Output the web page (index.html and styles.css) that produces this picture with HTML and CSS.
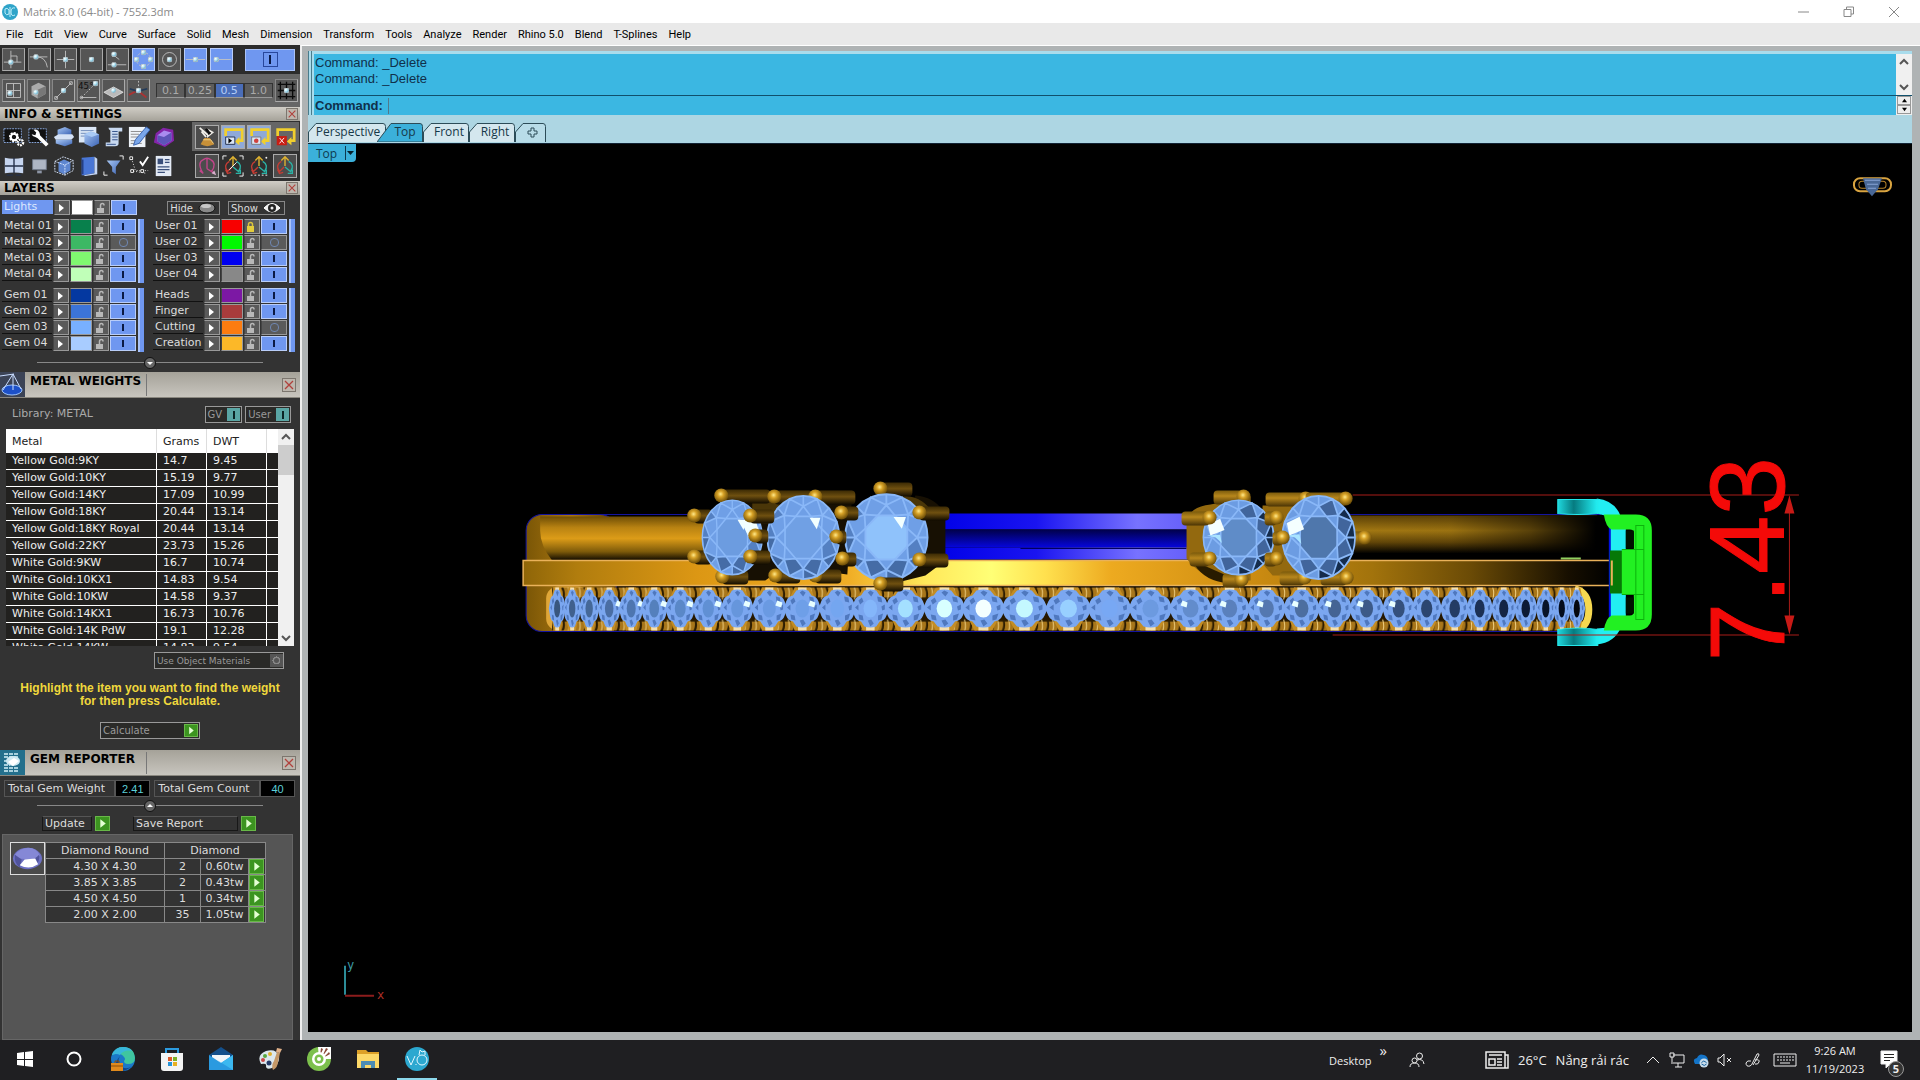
FILE: index.html
```html
<!DOCTYPE html>
<html lang="en">
<head>
    <meta charset="UTF-8">
    <meta name="viewport" content="width=device-width, initial-scale=1.0">
    <title>Matrix 8.0 (64-bit) - 7552.3dm</title>
    <link rel="stylesheet" href="styles.css">
</head>
<body>
    <!-- shared shapes -->
    <svg class="defs" aria-hidden="true">
        <defs>
            <radialGradient id="bead-fill" cx="35%" cy="35%" r="70%">
                <stop offset="0" stop-color="#fff"/><stop offset=".4" stop-color="#bfe9f5"/><stop offset="1" stop-color="#4a9cc0"/>
            </radialGradient>
            <linearGradient id="box-blue" x1="0" y1="0" x2="1" y2="1">
                <stop offset="0" stop-color="#a9c8f4"/><stop offset="1" stop-color="#3a62b4"/>
            </linearGradient>
            <symbol id="bead" viewBox="0 0 6 6"><circle cx="3" cy="3" r="3" fill="url(#bead-fill)"/></symbol>
            <symbol id="lock-open" viewBox="0 0 12 12"><path d="M5.500 6V3.500Q5.500 1.500 7.500 1.500Q9 1.500 9 3.500" fill="none" stroke="#b8b8b8" stroke-width="1.500"/><path d="M2 6h7v5H2z" fill="#b8b8b8"/></symbol>
            <symbol id="lock-shut" viewBox="0 0 12 12"><path d="M3.500 6V3.500Q3.500 1.500 5.500 1.500Q7.500 1.500 7.500 3.500V6" fill="none" stroke="#d9c23c" stroke-width="1.500"/><path d="M2 5h7v6H2z" fill="#e3cc3c"/></symbol>
            <symbol id="close" viewBox="0 0 12 12"><path d="M2 2l8 8M10 2l-8 8" stroke="#b0413c" stroke-width="1.300" fill="none"/></symbol>
            <symbol id="play" viewBox="0 0 12 12"><path d="M4 2v8l5-4z" fill="#e4ffd4"/></symbol>
        </defs>
    </svg>

    <header class="titlebar">
        <svg class="app-icon" viewBox="0 0 16 16"><circle cx="8" cy="8" r="8" fill="#2fa4c9"/><path d="M3 5q2-2 4 1v4q-3 2-4-1zM13 4q-4-1-4 4t4 3M8 3v10" fill="none" stroke="#bdeefa" stroke-width="1"/></svg>
        <h1>Matrix 8.0 (64-bit) - 7552.3dm</h1>
        <div class="window-buttons">
            <button aria-label="Minimize"><svg viewBox="0 0 12 12"><path d="M0 6h11"/></svg></button>
            <button aria-label="Restore"><svg viewBox="0 0 12 12"><path d="M1 3.500h7v7H1zM3.500 3.500V1h7v7H8"/></svg></button>
            <button aria-label="Close"><svg viewBox="0 0 12 12"><path d="M1 1l10 10M11 1L1 11"/></svg></button>
        </div>
    </header>

    <nav class="menubar">
        <a href="#">File</a><a href="#">Edit</a><a href="#">View</a><a href="#">Curve</a><a href="#">Surface</a><a href="#">Solid</a><a href="#">Mesh</a><a href="#">Dimension</a><a href="#">Transform</a><a href="#">Tools</a><a href="#">Analyze</a><a href="#">Render</a><a href="#">Rhino 5.0</a><a href="#">Blend</a><a href="#">T-Splines</a><a href="#">Help</a>
    </nav>

    <main class="desk">
        <aside class="side">
            <!-- object snaps -->
            <div class="snaps">
                <button class="snap" aria-label="Perpendicular"><svg viewBox="0 0 24 24"><path d="M1 15h20M9 2v20M9 8h7v7" /><use href="#bead" x="6" y="12" width="6" height="6"/></svg></button>
                <button class="snap" aria-label="Tangent"><svg viewBox="0 0 24 24"><path d="M1 9h8q10 0 12 12M9 9h12"/><use href="#bead" x="5" y="6" width="6" height="6"/></svg></button>
                <button class="snap" aria-label="Intersection"><svg viewBox="0 0 24 24"><path d="M2 12h20M12 2v20"/><use href="#bead" x="9" y="9" width="6" height="6"/></svg></button>
                <button class="snap" aria-label="Point"><svg viewBox="0 0 24 24"><use href="#bead" x="9" y="9" width="6" height="6"/></svg></button>
                <button class="snap" aria-label="Near"><svg viewBox="0 0 24 24"><path d="M1 18h21M10 9l4 3"/><use href="#bead" x="5" y="3" width="6" height="6"/><use href="#bead" x="5" y="15" width="6" height="6"/></svg></button>
                <button class="snap on" aria-label="Quadrant"><svg viewBox="0 0 24 24"><circle cx="12" cy="12" r="8" stroke-dasharray="3 2"/><use href="#bead" x="9" y="1" width="6" height="6"/><use href="#bead" x="9" y="17" width="6" height="6"/><use href="#bead" x="1" y="9" width="6" height="6"/><use href="#bead" x="17" y="9" width="6" height="6"/></svg></button>
                <button class="snap" aria-label="Center"><svg viewBox="0 0 24 24"><circle cx="12" cy="12" r="8"/><use href="#bead" x="9" y="9" width="6" height="6"/></svg></button>
                <button class="snap on" aria-label="Midpoint"><svg viewBox="0 0 24 24"><path d="M1 12h22"/><use href="#bead" x="9" y="9" width="6" height="6"/></svg></button>
                <button class="snap on" aria-label="End"><svg viewBox="0 0 24 24"><path d="M5 12h18"/><use href="#bead" x="3" y="9" width="6" height="6"/></svg></button>
                <button class="snap-all" aria-label="Snaps on"><span></span></button>
            </div>
            <div class="grid-row">
                <button class="snap" aria-label="Planar"><svg viewBox="0 0 24 24"><path d="M4 4h16v16H4zM12 4v16M4 12h16"/><use href="#bead" x="5" y="12" width="6" height="6"/></svg></button>
                <button class="snap" aria-label="Box"><svg viewBox="0 0 24 24"><path d="M4 7l8-4 8 4v9l-9 5-7-4z" fill="#aaa" stroke="none"/><path d="M11 11l9-4v9l-9 5z" fill="#777" stroke="none"/><use href="#bead" x="6" y="11" width="6" height="6"/></svg></button>
                <button class="snap" aria-label="Line"><svg viewBox="0 0 24 24"><path d="M3 21L21 3M2 19h3v3H2zM19 2h3v3h-3z"/><use href="#bead" x="9" y="9" width="6" height="6"/></svg></button>
                <button class="snap gap" aria-label="Angle"><svg viewBox="0 0 24 24"><path d="M4 20L18 6" stroke-dasharray="2 2"/><path d="M3 20h18"/><circle cx="4" cy="20" r="1.500"/><text x="0" y="10" class="deg">45°</text><use href="#bead" x="17" y="1" width="6" height="6"/></svg></button>
                <button class="snap" aria-label="Project"><svg viewBox="0 0 24 24"><path d="M1 14l11-6 11 6-11 6z" fill="#bbb" stroke="#ddd"/><use href="#bead" x="9" y="9" width="6" height="6"/></svg></button>
                <button class="snap" aria-label="Smart track"><svg viewBox="0 0 24 24"><path d="M12 1v10" stroke-dasharray="2 2"/><path d="M1 17l10-5 10 8" stroke="#a33" stroke-width="2"/><path d="M2 10l9 3 11-3" stroke="#223a5a" stroke-width="2"/><use href="#bead" x="9" y="9" width="6" height="6"/></svg></button>
                <div class="steps">
                    <button>0.1</button><button>0.25</button><button class="on">0.5</button><button>1.0</button>
                </div>
                <button class="snap" aria-label="Grid snap"><svg viewBox="0 0 24 24"><path d="M5 2v20M12 2v20M19 2v20M2 5h20M2 12h20M2 19h20" stroke="#0a0a0a" stroke-width="1.500"/><use href="#bead" x="9" y="9" width="6" height="6"/></svg></button>
            </div>

            <div class="strip"><h2>INFO &amp; SETTINGS</h2><button class="close" aria-label="Close"><svg><use href="#close"/></svg></button></div>
            <div class="tools">
                <div class="tool-set">
                    <button aria-label="Options"><svg viewBox="0 0 24 24"><path d="M1 3h19v15H1z" fill="#111" stroke="#8fb0e8" stroke-dasharray="2 1"/><circle cx="12" cy="12" r="4" fill="none" stroke="#fff" stroke-width="3" stroke-dasharray="2 1"/><circle cx="12" cy="12" r="3.500" fill="none" stroke="#fff" stroke-width="2"/><circle cx="19" cy="18" r="3" fill="none" stroke="#fff" stroke-width="2.500" stroke-dasharray="2 1"/></svg></button>
                    <button aria-label="Tools"><svg viewBox="0 0 24 24"><path d="M1 3h19v15H1z" fill="#111" stroke="#8fb0e8" stroke-dasharray="2 1"/><path d="M10 10l11 11" stroke="#fff" stroke-width="4"/><path d="M6 4q6-1 7 5t-5 3q-3 0-4-3l4 1 1-3z" fill="#fff"/></svg></button>
                    <button aria-label="Cut"><svg viewBox="0 0 24 24"><path d="M5 4l8-3 7 3v6H5z" fill="url(#box-blue)"/><path d="M1 12l5-3h15l2 3-3 3H3z" fill="#d6e2f5"/><path d="M3 15h18v4l-8 3-10-3z" fill="url(#box-blue)"/></svg></button>
                    <button aria-label="Object info"><svg viewBox="0 0 24 24"><path d="M1 1h19v17H1z" fill="#dbe7f6"/><path d="M3 5h14M3 8h10M3 11h6" stroke="#6b88b8"/><path d="M7 9l7-3 9 3v10l-8 4-8-4z" fill="url(#box-blue)"/><path d="M7 9l8 3 8-3-9-3z" fill="#a9caf5"/></svg></button>
                    <button aria-label="History"><svg viewBox="0 0 24 24"><path d="M6 2h15v4h-4v13q0 3-4 3H3v-4h5V5q-2-1-2-3z" fill="#c8d9f0"/><path d="M10 6h6M10 9h6M10 12h6M10 15h6M4 20h10" stroke="#2d4b85"/></svg></button>
                    <button aria-label="Notes"><svg viewBox="0 0 24 24"><path d="M1 1h18v22H1z" fill="#eef3f8"/><path d="M3 6h12M3 9h9M3 12h9M3 16h12M3 19h12" stroke="#888"/><path d="M20 1l4 3-12 15-6 2 2-6z" fill="#7aa7ea" stroke="#345fae"/></svg></button>
                    <button aria-label="Package"><svg viewBox="0 0 24 24"><path d="M3 8l8-6 11 2 1 12-10 7L1 18z" fill="#8424a8"/><path d="M5 10l7-5 8 2v9l-8 5-7-4z" fill="#a98cf0"/><path d="M5 10l7 2 8-5v9l-8 5-7-4z" fill="#5d54b8"/></svg></button>
                    <button aria-label="Viewports"><svg viewBox="0 0 24 24"><path d="M2 3q9 2 20 0v17q-10-2-20 0z" fill="#c6d5ef"/><path d="M12 3v17M2 12h20M4 22h7M14 22h6" stroke="#25304a" stroke-width="1.500"/></svg></button>
                    <button aria-label="Display"><svg viewBox="0 0 24 24"><path d="M5 5h15v11H5z" fill="#aeb6c4" stroke="#6f7889"/><path d="M10 17h5v3h-5z" fill="#8d95a5"/></svg></button>
                    <button aria-label="Bounding box"><svg viewBox="0 0 24 24"><path d="M6 8l6-3 7 3v9l-7 4-6-3z" fill="#5e86d0"/><path d="M2 7l9-5 11 4v11l-9 5-11-4zM2 7l11 4 9-5M13 11v11" fill="none" stroke="#dce9ff" stroke-dasharray="2 1"/></svg></button>
                    <button aria-label="Library"><svg viewBox="0 0 24 24"><path d="M4 3l14-1v18l-12 2H4z" fill="#4976d6"/><path d="M18 2l3 2v17l-13 2-2-1 12-2z" fill="#c4d6f5"/><path d="M5 5v16" stroke="#243f85" stroke-width="2"/></svg></button>
                    <button aria-label="Filter"><svg viewBox="0 0 24 24"><path d="M4 6h15l-5 7v8l-4-3v-5z" fill="url(#box-blue)"/><path d="M18 1h4v4M1 18v4h4" stroke="#fff" fill="none"/></svg></button>
                    <button aria-label="Points"><svg viewBox="0 0 24 24"><path d="M4 4l4 13h14M3 17L20 20" stroke="#fff" stroke-dasharray="1 2" fill="none"/><path d="M2 2h3v3H2zM3 16h3v3H3zM14 16h3v3h-3z" fill="#222" stroke="#fff"/><path d="M13 7l3 4 6-9" stroke="#fff" stroke-width="2" fill="none"/></svg></button>
                    <button aria-label="Report"><svg viewBox="0 0 24 24"><path d="M3 1h17v22H3z" fill="#e3eaf5"/><path d="M5 4h6v6H5z" fill="#3a4f7a"/><path d="M13 5h5M13 8h5M5 13h13M5 16h13M5 19h8" stroke="#3a4f7a" stroke-width="1.500"/></svg></button>
                </div>
                <div class="tool-set right">
                    <button class="framed" aria-label="Render metal"><svg viewBox="0 0 24 24"><path d="M5 20l4-7h6l5 7q-8 4-15 0z" fill="#c79038"/><path d="M8 15h8l3 4" fill="none" stroke="#f3d58b"/><path d="M4 2l8 7M11 12l-5-6M13 4l5 3-5 4z" stroke="#f0eee8" stroke-width="2"/><path d="M11 3l4 6" stroke="#111" stroke-width="3"/></svg></button>
                    <button class="framed lit" aria-label="Loop play"><svg viewBox="0 0 24 24"><path d="M4 11V4h18v12h-5" fill="none" stroke="#f1cf2e" stroke-width="3"/><path d="M19 12v9l-5-4z" fill="#f1cf2e"/><path d="M4 12h10v8H4z" fill="#dbe6f5" stroke="#1c2b4a"/><path d="M7 13v6l4-3z"/></svg></button>
                    <button class="framed lit" aria-label="Loop record"><svg viewBox="0 0 24 24"><path d="M4 11V4h18v12h-5" fill="none" stroke="#f1cf2e" stroke-width="3"/><path d="M19 12v9l-5-4z" fill="#f1cf2e"/><path d="M4 12h10v8H4z" fill="#dbe6f5" stroke="#777"/><circle cx="9" cy="16" r="2.500" fill="#d0413d"/></svg></button>
                    <button aria-label="Loop stop"><svg viewBox="0 0 24 24"><path d="M4 11V4h18v12h-5" fill="none" stroke="#f1cf2e" stroke-width="3"/><path d="M19 12v9l-5-4z" fill="#f1cf2e"/><path d="M3 11h11v10H3z" fill="#c91d12"/><path d="M6 13l5 6M11 13l-5 6" stroke="#fff"/></svg></button>
                    <button class="framed" aria-label="Gumball rotate"><svg viewBox="0 0 24 24"><path d="M7 19Q1 8 8 5q4-3 8 0 7 4 1 13M12 4v11M4 17l4 3M12 15l8 5" fill="none" stroke="#c2458a" stroke-width="1.500"/><path d="M17 20l5 2-2-5" fill="#d9b0cc"/></svg></button>
                    <button aria-label="Gumball scale"><svg viewBox="0 0 24 24"><path d="M12 3v9M8 6l4-4 4 4" fill="none" stroke="#e0b32f" stroke-width="1.500"/><path d="M8 7Q1 11 6 18l5-5M4 16l2 4 4-1" fill="none" stroke="#c33c34" stroke-width="1.500"/><path d="M16 7q7 4 2 11l-6-5M15 20h5v-4" fill="none" stroke="#2bb3a6" stroke-width="1.500"/><path d="M1 5V1h4M19 1h4v4M1 19v4h4M23 19v4h-4M8 16l8-8" fill="none" stroke="#fff"/></svg></button>
                    <button aria-label="Gumball move"><svg viewBox="0 0 24 24"><path d="M12 3v9M8 6l4-4 4 4" fill="none" stroke="#e0b32f" stroke-width="1.500"/><path d="M8 7Q1 11 6 18l5-5M4 16l2 4 4-1" fill="none" stroke="#c33c34" stroke-width="1.500"/><path d="M16 7q7 4 2 11l-6-5M15 20h5v-4" fill="none" stroke="#2bb3a6" stroke-width="1.500"/><path d="M19 3h3M20 2v3M3 22h18" stroke="#fff" stroke-dasharray="2 2"/></svg></button>
                    <button class="framed" aria-label="Gumball on"><svg viewBox="0 0 24 24"><path d="M12 3v9M8 6l4-4 4 4" fill="none" stroke="#e0b32f" stroke-width="1.500"/><path d="M8 7Q1 11 6 18l5-5M4 16l2 4 4-1" fill="none" stroke="#c33c34" stroke-width="1.500"/><path d="M16 7q7 4 2 11l-6-5M15 20h5v-4" fill="none" stroke="#2bb3a6" stroke-width="1.500"/></svg></button>
                </div>
            </div>

            <div class="strip"><h2>LAYERS</h2><button class="close" aria-label="Close"><svg><use href="#close"/></svg></button></div>
            <section class="layers">
                <div class="layer-top">
                    <div id="layer-lights"></div>
                    <div class="hide-show">
                        <button>Hide <svg viewBox="0 0 18 12"><ellipse cx="9" cy="6" rx="8" ry="5" fill="#888" stroke="#111"/><ellipse cx="8" cy="4" rx="5" ry="2" fill="#c8c8c8"/></svg></button>
                        <button>Show <svg viewBox="0 0 18 12"><path d="M1 6q8-9 16 0-8 8-16 0z" fill="#eee" stroke="#fff"/><circle cx="9" cy="6" r="4" fill="#222"/><circle cx="9" cy="6" r="1.500" fill="#eee"/></svg></button>
                    </div>
                </div>
                <div class="layer-grid" id="layer-grid"></div>
            </section>
            <div class="fold"><button aria-label="Fold layers"><svg viewBox="0 0 12 12"><circle cx="6" cy="6" r="5.500" fill="#666" stroke="#111"/><path d="M3 5h6L6 8z" fill="#fff"/></svg></button></div>

            <div class="panel-head">
                <svg class="panel-icon" viewBox="0 0 25 25"><path fill="#3b4356" d="M0 0h25v25H0z"/><ellipse cx="12" cy="18" rx="10" ry="5" fill="#1c50c8" stroke="#9cc4ff"/><path d="M0 4l14-2M13 2L3 18M13 2l8 15M13 2v16" stroke="#c8dcff" fill="none"/></svg>
                <h2>METAL WEIGHTS</h2><button class="close" aria-label="Close"><svg><use href="#close"/></svg></button>
            </div>
            <section class="metals">
                <div class="library">
                    <span>Library: METAL</span>
                    <button class="switch">GV<i></i></button>
                    <button class="switch">User<i></i></button>
                </div>
                <div class="metal-list">
                    <table>
                        <thead><tr><th>Metal</th><th>Grams</th><th>DWT</th><th></th></tr></thead>
                        <tbody>
                            <tr><td>Yellow Gold:9KY</td><td>14.7</td><td>9.45</td><td></td></tr>
                            <tr><td>Yellow Gold:10KY</td><td>15.19</td><td>9.77</td><td></td></tr>
                            <tr><td>Yellow Gold:14KY</td><td>17.09</td><td>10.99</td><td></td></tr>
                            <tr><td>Yellow Gold:18KY</td><td>20.44</td><td>13.14</td><td></td></tr>
                            <tr><td>Yellow Gold:18KY Royal</td><td>20.44</td><td>13.14</td><td></td></tr>
                            <tr><td>Yellow Gold:22KY</td><td>23.73</td><td>15.26</td><td></td></tr>
                            <tr><td>White Gold:9KW</td><td>16.7</td><td>10.74</td><td></td></tr>
                            <tr><td>White Gold:10KX1</td><td>14.83</td><td>9.54</td><td></td></tr>
                            <tr><td>White Gold:10KW</td><td>14.58</td><td>9.37</td><td></td></tr>
                            <tr><td>White Gold:14KX1</td><td>16.73</td><td>10.76</td><td></td></tr>
                            <tr><td>White Gold:14K PdW</td><td>19.1</td><td>12.28</td><td></td></tr>
                            <tr><td>White Gold:14KW</td><td>14.83</td><td>9.54</td><td></td></tr>
                        </tbody>
                    </table>
                    <div class="scroll">
                        <svg viewBox="0 0 16 16"><path d="M4 10l4-4 4 4"/></svg>
                        <div class="thumb"></div>
                        <svg viewBox="0 0 16 16"><path d="M4 6l4 4 4-4"/></svg>
                    </div>
                </div>
                <button class="switch materials">Use Object Materials<i></i></button>
                <p class="hint">Highlight the item you want to find the weight<br>for then press Calculate.</p>
                <button class="switch calc">Calculate<svg class="go"><use href="#play"/></svg></button>
            </section>

            <div class="panel-head">
                <svg class="panel-icon" viewBox="0 0 25 25"><path fill="#236f8c" d="M0 0h25v25H0z"/><path d="M4 4h14M4 7h14M4 11h6M4 15h6M4 18h14M4 21h14" stroke="#d5f1f8" stroke-width="1.500" stroke-dasharray="4 1"/><ellipse cx="13" cy="11" rx="7" ry="5" fill="#cfe9f2"/><path d="M8 12l5 4 6-5-5-3z" fill="#fff"/></svg>
                <h2>GEM REPORTER</h2><button class="close" aria-label="Close"><svg><use href="#close"/></svg></button>
            </div>
            <section class="gems">
                <div class="totals">
                    <label for="gem-weight">Total Gem Weight</label><input id="gem-weight" value="2.41" readonly>
                    <label for="gem-count">Total Gem Count</label><input id="gem-count" value="40" readonly>
                </div>
                <div class="fold"><button aria-label="Fold report"><svg viewBox="0 0 12 12"><circle cx="6" cy="6" r="5.500" fill="#666" stroke="#111"/><path d="M3 7h6L6 4z" fill="#fff"/></svg></button></div>
                <div class="actions">
                    <button class="update"><span>Update</span><svg class="go"><use href="#play"/></svg></button>
                    <button class="save"><span>Save Report</span><svg class="go"><use href="#play"/></svg></button>
                </div>
                <div class="report">
                    <svg class="gem-thumb" viewBox="0 0 34 32"><ellipse cx="17" cy="16" rx="15" ry="11" fill="#6d70c2"/><path d="M4 12q6-7 14-7t12 8l-9 4-13-1z" fill="#8588d6"/><path d="M4 12l7 5-2 8q-6-4-5-13zM29 12l-5 5 1 6q5-4 4-11z" fill="#50539c"/><path d="M9 23l5-6 11-1 3 6q-9 6-19 1z" fill="#fff"/></svg>
                    <table>
                        <tr><th>Diamond Round</th><th colspan="3">Diamond</th></tr>
                        <tr><td>4.30 X 4.30</td><td>2</td><td>0.60tw</td><td><button aria-label="Select 4.30"><svg class="go"><use href="#play"/></svg></button></td></tr>
                        <tr><td>3.85 X 3.85</td><td>2</td><td>0.43tw</td><td><button aria-label="Select 3.85"><svg class="go"><use href="#play"/></svg></button></td></tr>
                        <tr><td>4.50 X 4.50</td><td>1</td><td>0.34tw</td><td><button aria-label="Select 4.50"><svg class="go"><use href="#play"/></svg></button></td></tr>
                        <tr><td>2.00 X 2.00</td><td>35</td><td>1.05tw</td><td><button aria-label="Select 2.00"><svg class="go"><use href="#play"/></svg></button></td></tr>
                    </table>
                </div>
            </section>
        </aside>

        <section class="work">
            <div class="command">
                <div class="history">
                    <div class="log">Command: _Delete<br>Command: _Delete</div>
                    <div class="scroll">
                        <svg viewBox="0 0 16 16"><path d="M4 10l4-4 4 4"/></svg>
                        <svg viewBox="0 0 16 16"><path d="M4 6l4 4 4-4"/></svg>
                    </div>
                </div>
                <div class="prompt">
                    <label for="cmd">Command:</label><input id="cmd" type="text">
                    <div class="spin"><button aria-label="Previous"><svg viewBox="0 0 8 6"><path d="M1 5h6L4 1z"/></svg></button><button aria-label="Next"><svg viewBox="0 0 8 6"><path d="M1 1h6L4 5z"/></svg></button></div>
                </div>
            </div>
            <div class="tabs">
                <button class="tab first"><svg viewBox="0 0 78 20"><path d="M.5 20V10L8 1.500h67q2.500 0 2.500 3V20"/></svg>Perspective</button>
                <button class="tab active"><svg viewBox="0 0 46 20"><path d="M0 20L14 1.500h29q2.500 0 2.500 3V20z"/></svg>Top</button>
                <button class="tab"><svg viewBox="0 0 46 20"><path d="M.5 20V10L8 1.500h35q2.500 0 2.500 3V20"/></svg>Front</button>
                <button class="tab"><svg viewBox="0 0 46 20"><path d="M.5 20V10L8 1.500h35q2.500 0 2.500 3V20"/></svg>Right</button>
                <button class="tab plus" aria-label="New viewport"><svg viewBox="0 0 31 20"><path d="M.5 20V10L8 1.500h20q2.500 0 2.500 3V20"/><path d="M16 6h3v3h3v3h-3v3h-3v-3h-3V9h3z" fill="none"/></svg></button>
            </div>
            <div class="viewport">
                <button class="view-name">Top<svg viewBox="0 0 10 18"><path d="M.5 2v14" stroke="#0d3a50"/><path d="M2 7h7l-3.500 4z" fill="#06202c"/></svg></button>
                <svg class="scene" viewBox="308 144 1603 887">
                    <defs>
                        <linearGradient id="tube" x1="0" y1="0" x2="0" y2="1">
                            <stop offset="0" stop-color="#6d4d05"/><stop offset=".25" stop-color="#b88212"/><stop offset=".5" stop-color="#dc9c18"/><stop offset=".8" stop-color="#7d5a0a"/><stop offset="1" stop-color="#0d0800"/>
                        </linearGradient>
                        <linearGradient id="tube-dim" x1="0" y1="0" x2="0" y2="1">
                            <stop offset="0" stop-color="#5a4006"/><stop offset=".4" stop-color="#a37812"/><stop offset=".7" stop-color="#644708"/><stop offset="1" stop-color="#000"/>
                        </linearGradient>
                        <linearGradient id="fade" x1="0" x2="1"><stop offset="0" stop-color="#000" stop-opacity="0"/><stop offset=".4" stop-color="#000" stop-opacity=".05"/><stop offset=".7" stop-color="#000" stop-opacity=".45"/><stop offset=".95" stop-color="#000"/></linearGradient>
                        <linearGradient id="edge" x1="0" x2="1"><stop offset="0" stop-color="#7a5606"/><stop offset=".5" stop-color="#a87510"/><stop offset="1" stop-color="#5c3f03"/></linearGradient>
                        <linearGradient id="band" x1="0" x2="1">
                            <stop offset="0" stop-color="#8e6508"/><stop offset=".05" stop-color="#b17d0e"/><stop offset=".16" stop-color="#dc9714"/><stop offset=".3" stop-color="#f0ae26"/><stop offset=".37" stop-color="#ffe85a"/><stop offset=".43" stop-color="#ffff76"/><stop offset=".48" stop-color="#ffe04e"/><stop offset=".54" stop-color="#edaa20"/><stop offset=".66" stop-color="#d08e12"/><stop offset=".78" stop-color="#a2730c"/><stop offset=".87" stop-color="#6b4b06"/><stop offset=".96" stop-color="#170f00"/><stop offset="1" stop-color="#000"/>
                        </linearGradient>
                        <linearGradient id="blue-a" x1="0" x2="1"><stop offset="0" stop-color="#0000e8"/><stop offset=".4" stop-color="#1a14f0"/><stop offset=".8" stop-color="#7772ff"/><stop offset="1" stop-color="#6660fa"/></linearGradient>
                        <linearGradient id="blue-b" x1="0" y1="0" x2="0" y2="1"><stop offset="0" stop-color="#000048"/><stop offset="1" stop-color="#0606dc"/></linearGradient>
                        <radialGradient id="ball" cx="45%" cy="40%" r="60%"><stop offset="0" stop-color="#ffe98a"/><stop offset=".35" stop-color="#d7a227"/><stop offset="1" stop-color="#6a4b06"/></radialGradient>
                        <linearGradient id="shaft" x1="0" y1="0" x2="0" y2="1"><stop offset="0" stop-color="#3b2a04"/><stop offset=".45" stop-color="#6f5010"/><stop offset="1" stop-color="#120c00"/></linearGradient>
                        <linearGradient id="shaft-lit" x1="0" y1="0" x2="0" y2="1"><stop offset="0" stop-color="#7a5a0c"/><stop offset=".4" stop-color="#b8871c"/><stop offset="1" stop-color="#4a3405"/></linearGradient>
                        <linearGradient id="cyan" x1="0" x2="1"><stop offset="0" stop-color="#1fd8de"/><stop offset=".4" stop-color="#067b80"/><stop offset="1" stop-color="#22f0f4"/></linearGradient>
                        <pattern id="channel" width="11" height="44" patternUnits="userSpaceOnUse" y="587">
                            <path fill="#a8761a" d="M0 0h11v44H0z"/><path fill="#261800" d="M0 10h11v24H0z"/><path d="M1 0q3 5 1 12M1 44q3-5 1-12" stroke="#2c1c00" stroke-width="2" fill="none"/><path d="M7 0q2 5 0 12M7 44q2-5 0-12" stroke="#f0cf80" fill="none"/>
                        </pattern>
                        <!-- small channel stone, radius 20 -->
                        <g id="stone">
                            <path d="M-9-21H9l5 9H-14zM-9 22H9l5-10H-14z" fill="#c48d24"/>
                            <path d="M-5-21H5v4H-5zM-5 22H5v-4H-5z" fill="#f5dfae"/>
                            <path d="M-7-18Q0-20 7-18l4 5q6 1 8 6l3 7-3 7q-2 5-8 6l-4 5q-7 2-14 0l-4-5q-6-1-8-6l-3-7 3-7q2-5 8-6z" fill="#7ba7f0"/>
                            <path d="M-14-8l4-3 2 4-4 3zM-3-16l3-2 4 2-3 4zM8-12l5 1 1 5-5-1zM13-2l4-2v5l-3 1zM9 7l6-2-2 6-4 1zM-3 12l4-1 3 4-4 3zM-14 6l5 1 1 5-5-1zM-18-1l4-3v6z" fill="#4f78be"/>
                            <ellipse rx="8" ry="9" fill="currentColor"/>
                        </g>
                        <!-- centre stones, radius 40 -->
                        <g id="cut" fill="none" stroke="#8ab8f8" stroke-width="1.800">
                            <circle r="40"/>
                            <path d="M20.300 8.400L8.400 20.300-8.400 20.300-20.300 8.400-20.300-8.400-8.400-20.300 8.400-20.300 20.300-8.400z"/>
                            <path d="M30 0l-9.700 8.400 .9 12.800-12.800-.9L0 30l-8.400-9.700-12.800 .9 .9-12.800L-30 0l9.700-8.400-.9-12.800 12.800 .9L0-30l8.400 9.700 12.800-.9-.9 12.800z"/>
                            <path d="M30 0l7 15.300-15.800 5.900L15.300 37 0 30l-15.300 7-5.900-15.800L-37 15.300-30 0l-7-15.300 15.800-5.900L-15.300-37 0-30l15.300-7 5.900 15.800L37-15.300zM30 0h10M0 30v10M-30 0h-10M0-30v-10M21 21l7 7M-21 21l-7 7M21-21l7-7M-21-21l-7-7"/>
                        </g>
                        <g id="stone-left">
                            <circle r="40" fill="#6f9fe6"/>
                            <path d="M8.400 20.300l12.800 .9L15.300 37 0 30zM-8.400 20.300l-12.800 .9L-15.300 37 0 30zM37 15.300L28 28l-7-7zM-37 15.300L-28 28l7-7zM0 30v10l15-3zM-37 15L-30 0h-9z" fill="#456ca6"/>
                            <path d="M21 21l-.9-12.800L30 0l7 15.300zM-37-15l7 15h-10zM-21-21l-7-7-9 13z" fill="#5480c2"/>
                            <path d="M20.300 8.400L8.400 20.300-8.400 20.300-20.300 8.400-20.300-8.400-8.400-20.300 8.400-20.300 20.300-8.400z" fill="currentColor"/>
                            <use href="#cut"/>
                            <path d="M7-19l12 0-4 11z" fill="#f2ffff"/>
                        </g>
                        <g id="stone-right">
                            <circle r="40" fill="#6c9ce2"/>
                            <path d="M8.400 20.300l12.800 .9L15.300 37 0 30zM-8.400 20.300l-12.800 .9L-15.300 37 0 30zM20 8l10-8 7 15-16 6zM20-8L30 0l7-15-16-6zM8-20l-8-10 15-7 6 16z" fill="#41659c"/>
                            <path d="M30 0h10l-3 15zM30 0h10l-3-15zM37 15l-9 13-7-7zM37-15l-9-13-7 7zM0 30v10l15-3zM21 21l7 7-12 9z" fill="#152c4c"/>
                            <path d="M20.300 8.400L8.400 20.300-8.400 20.300-20.300 8.400-20.300-8.400-8.400-20.300 8.400-20.300 20.300-8.400z" fill="currentColor"/>
                            <use href="#cut"/>
                            <path d="M-35-14l14-6 5 12-16 6z" fill="#f4ffff"/>
                            <path d="M-36-2l10 2 7 6-2-9z" fill="#a9e4ff"/>
                        </g>
                    </defs>

                    <!-- back of the band -->
                    <rect x="526" y="514" width="90" height="117" rx="16" fill="url(#edge)" stroke="#1414a0"/>
                    <path d="M545 514H1600M545 631H1570" stroke="#1414a0"/>
                    <path d="M540 516H715V560H552Q540 545 540 530z" fill="url(#tube)"/>
                    <path d="M1345 515H1596Q1606 520 1606 553H1345z" fill="url(#tube-dim)"/>
                    <path d="M1345 515H1608V556H1345z" fill="url(#fade)"/>
                    <path d="M935 513h252v16H935z" fill="url(#blue-a)"/>
                    <path d="M935 529h252v18H935z" fill="url(#blue-b)"/>
                    <path d="M935 547h252v12H935z" fill="url(#blue-a)"/>
                    <path d="M1020 548h166" stroke="#000060"/>

                    <!-- channel with small stones -->
                    <rect x="546" y="586" width="44" height="44" rx="12" fill="#dfa638"/>
                    <rect x="552" y="587" width="1030" height="43" fill="url(#channel)"/>
                    <path d="M1574 588q14 4 14 21t-12 20" fill="none" stroke="#f5d850" stroke-width="7"/>
                    <g id="small-stones"></g>
                    <path d="M1560 558h20" stroke="#90d060" stroke-width="2"/>
                    <rect x="523" y="560" width="1088" height="25" fill="url(#band)" stroke="#eab25a" stroke-width="1.500"/>

                    <!-- heads -->
                    <path d="M725 492h45l20 10v60l-25 18h-40zM780 490h72l-5 84-67-9zM915 495q22 2 30 20v45l-20 15-40 10z" fill="#171003"/>
                    <path d="M752 501h30v22h-30zM900 495q20 0 30 14v10h-24z" fill="#4a3608"/>
                    <path d="M1186 520q4-14 24-16l40-8v84h-30q-20-4-34-22zM1262 505h38v70h-28l-12-14z" fill="#93690f"/>
                    <path d="M1192 560l50 22h-20q-22-4-30-22z" fill="#281b00"/>
                    <g id="prongs-back"></g>
                    <use href="#stone-left" transform="translate(732 537) scale(.75 .93)" color="#6c9ce0"/>
                    <path d="M741 521l14-2 4 12-10 7z" fill="#f2ffff"/>
                    <use href="#stone-left" transform="translate(803 537) scale(.9 1.040)" color="#70a0e4"/>
                    <use href="#stone-left" transform="translate(886 537) scale(1.030 1.080)" color="#8fc2fb"/>
                    <use href="#stone-right" transform="translate(1238 537) scale(.88 .93)" color="#5f8cc8"/>
                    <use href="#stone-right" transform="translate(1318 537) scale(.91 1.040)" color="#4f77ac"/>
                    <g id="prongs-front"></g>

                    <!-- clasp -->
                    <path d="M1596 498q18 2 24 18h-12l-12-3zM1596 644q18-2 24-17h-12l-12 1z" fill="#22eef2"/>
                    <path d="M1557 499h40v14q-20 2-40 0zM1557 645h40v-16q-20-3-40 0z" fill="url(#cyan)" stroke="#25e8ea"/>
                    <path d="M1609 524h16v96h-16z" fill="#22eef2"/><path d="M1609 524v96" stroke="#0010e0" stroke-width="2"/>
                    <path d="M1603 514h32q16 0 16 16v84q0 16-16 16h-32q2-13 8-15h18q4 0 4-4v-78q0-4-4-4h-18q-6-2-8-15z" fill="#22f022"/>
                    <path d="M1625 530h8v18h-8zM1625 597h8v16h-8z" fill="#001200"/>
                    <path d="M1609 550h13v43h-13z" fill="#067806"/><path d="M1621 549h14v45h-14z" fill="#22f022"/>
                    <path d="M1635 525h8v94h-8zM1621 549h22M1621 594h22" fill="none" stroke="#0cb40c"/>
                    <path d="M1611 560V585" stroke="#eab25a" stroke-width="2"/>

                    <!-- dimension -->
                    <path d="M1352 494.500H1798M1332 634.500H1798M1788.500 496V632" stroke="#a81c18" fill="none"/>
                    <path d="M1788.500 495l5 18h-10zM1788.500 634l5-19h-10z" fill="#c81a16"/>
                    <text class="dim" transform="translate(1783 661) rotate(-90)">7.43</text>

                    <!-- axes -->
                    <path d="M345 994V965" stroke="#2c8c98" stroke-width="2"/><path d="M345 995h29" stroke="#8c1c1c" stroke-width="2"/>
                    <text class="axis" x="347" y="968" fill="#3c98a4">y</text><text class="axis" x="377" y="998" fill="#b03028">x</text>

                    <!-- view widget -->
                    <rect x="1853" y="178" width="37" height="13" rx="6" fill="none" stroke="#d9a440" stroke-width="2"/>
                    <rect x="1858" y="181" width="27" height="7" rx="3" fill="none" stroke="#b9852a"/>
                    <path d="M1862 178h19l-4 11-6 7-6-7z" fill="#496796"/><path d="M1864 180h15M1866 184h11M1867 188h8" stroke="#86a4d6"/>
                </svg>
            </div>
        </section>
    </main>

    <footer class="taskbar">
        <div class="apps">
            <button aria-label="Start"><svg viewBox="0 0 24 24"><path d="M4 6l7-1v7H4zM12 5l8-1v8h-8zM4 13h7v6l-7-1zM12 13h8v7l-8-1z" fill="#fff"/></svg></button>
            <button aria-label="Search"><svg viewBox="0 0 24 24"><circle cx="12" cy="12" r="6.500" fill="none" stroke="#fff" stroke-width="2"/></svg></button>
            <button aria-label="Edge"><svg viewBox="0 0 24 24"><circle cx="12" cy="12" r="12" fill="#1b78c8"/><path d="M1 8Q4 0 12 0q11 0 12 11 0 6-7 6-4 0-4-3 2-2 0-4-4-6-12-2z" fill="#3fc5a0"/><path d="M1 8Q4 0 12 0q6 0 9 4-8-2-12 4-4-2-8 0z" fill="#38b6dc"/><path d="M9 9q-4 6 2 11 5 3 10-1-5 5-12 5Q0 20 9 9z" fill="#10448c"/><path d="M0 16h12v8H0z" fill="#e08a1c"/><path d="M4 16v-2h4v2M0 19h12" stroke="#8a4c08" fill="none"/></svg></button>
            <button aria-label="Store"><svg viewBox="0 0 24 24"><path d="M6 6V2h12v4" fill="none" stroke="#2c9be0" stroke-width="2"/><path d="M1 6h22v15q0 3-3 3H4q-3 0-3-3z" fill="#f4f4f4"/><path d="M8 10h4v4H8z" fill="#e05a28"/><path d="M13 10h4v4h-4z" fill="#7cb228"/><path d="M8 15h4v4H8z" fill="#2894d8"/><path d="M13 15h4v4h-4z" fill="#e8b020"/></svg></button>
            <button aria-label="Mail"><svg viewBox="0 0 24 24"><path d="M0 8l12-8 12 8v4H0z" fill="#14508c"/><path d="M3 8h18v8H3z" fill="#f2f6fa"/><path d="M0 8l12 8 12-8v15H0z" fill="#2a9ae0"/><path d="M24 8v15L8 13l4 3z" fill="#3cb8f0"/></svg></button>
            <button aria-label="Paint"><svg viewBox="0 0 24 24"><path d="M3 17Q-2 8 8 4q10-3 13 5 1 8-7 12-6 2-6-2 1-3-5-2z" fill="#dce8ee"/><circle cx="7" cy="9" r="2" fill="#58a840"/><circle cx="12" cy="7" r="2" fill="#e0b030"/><circle cx="5" cy="13" r="2" fill="#c84848"/><circle cx="11" cy="16" r="2.500" fill="#243a68"/><path d="M15 23q-2-5 1-9l3-9 3 1-2 9q0 5-5 8z" fill="#c49868"/><path d="M18 5l1-4 5 1-2 4z" fill="#e0b088"/></svg></button>
            <button aria-label="Coc Coc"><svg viewBox="0 0 24 24"><circle cx="12" cy="12" r="12" fill="#7cc04c"/><path d="M12 12L11 0h13v12z" fill="#fff"/><path d="M13 9l1-8 2 1zM15 10l4-9 2 1zM16 11l6-6 1 2z" fill="#8a4838"/><circle cx="12" cy="12" r="7" fill="#fff"/><circle cx="12" cy="12" r="4.500" fill="#7cc04c"/><circle cx="12" cy="12" r="2" fill="#fff"/></svg></button>
            <button aria-label="Explorer"><svg viewBox="0 0 24 24"><path d="M1 3h9l2 2h11v16H1z" fill="#dca028"/><path d="M1 7h22v14H1z" fill="#fcd868"/><path d="M5 21v-7h14v7h-4v-3H9v3z" fill="#4c8cb4"/></svg></button>
            <button class="open" aria-label="Matrix"><svg viewBox="0 0 24 24"><circle cx="12" cy="12" r="12" fill="#2ca8d0"/><path d="M2 9l4 9 4-9" fill="none" stroke="#e4f8ff"/><circle cx="17" cy="13" r="5" fill="none" stroke="#e4f8ff"/><path d="M14 8l1-5 2 2 3-1v4M11 17v1" fill="none" stroke="#e4f8ff"/></svg></button>
        </div>
        <div class="tray">
            <button class="desktop">Desktop</button>
            <button class="more" aria-label="More">»</button>
            <svg class="people" viewBox="0 0 16 16"><circle cx="10.500" cy="4" r="3"/><circle cx="5.500" cy="8.500" r="2.500"/><path d="M1 15q0-4 4.500-4t4.500 4M8 8q6-2 7 4"/></svg>
            <button class="weather"><svg viewBox="0 0 24 18"><path d="M1 1h19v16H1zM20 4h3v13h-3M4 4h13M4 8h6v6H4zM12 8h5M12 11h5M12 14h5" stroke-width="1.500"/></svg><span>26°C</span><span>Nắng rải rác</span></button>
            <svg class="i16" viewBox="0 0 16 16"><path d="M2 11l6-6 6 6"/></svg>
            <svg class="i16" viewBox="0 0 16 16"><path d="M4 3h11v8H4M9 11v4M6 15h7M1 1h4v4H1zM3 5v7"/></svg>
            <svg class="i16" viewBox="0 0 16 16"><path d="M2 12q-3-5 2-6 2-5 7-3 4 1 4 6v3z" fill="#1474c8" stroke="none"/><circle cx="11" cy="11" r="4.500" fill="#c8dcea" stroke="none"/><path d="M8.500 10.500q2-3 5 0M13.500 12q-2 3-5 0" stroke="#1460a0"/></svg>
            <svg class="i16" viewBox="0 0 16 16"><path d="M1 6h2l4-4v12l-4-4H1zM10 6l4 4M14 6l-4 4"/></svg>
            <svg class="i16 pen" viewBox="0 0 16 16"><path d="M6 9q-4-1-5 2 0 4 4 3 2-1 3-4l4-8q2-1 2 1L8 13M10 8q5-1 4 2-1 3-4 2"/></svg>
            <svg class="keys" viewBox="0 0 24 16"><path d="M1 2h22v12H1zM7 11h10"/><path d="M4 5h17M4 8h17" stroke-dasharray="2 1"/></svg>
            <div class="clock">9:26 AM<br>11/19/2023</div>
            <button class="notes" aria-label="Notifications"><svg viewBox="0 0 24 24"><path d="M2 3h16v13h-7l-4 4v-4H2z" fill="#fff"/><path d="M5 6.500h10M5 9.500h10M5 12.500h6" stroke="#222"/></svg><b>5</b></button>
        </div>
    </footer>

    <script src="script.js"></script>
</body>
</html>
```

FILE: styles.css
```css
* {
    box-sizing: border-box;
}

body {
    margin: 0;
    height: 100vh;
    display: flex;
    flex-direction: column;
    overflow: hidden;
    background: #333;
    font-family: "DejaVu Sans", Verdana, sans-serif;
    font-size: 11px;
}

button, input {
    font: inherit;
    color: inherit;
    margin: 0;
    padding: 0;
    border: 0;
    background: none;
}

svg {
    display: block;
}

h1, h2, p {
    margin: 0;
}

.defs {
    position: absolute;
    width: 0;
    height: 0;
}

/* title and menu */
.titlebar {
    height: 23px;
    flex: none;
    display: flex;
    align-items: center;
    gap: 5px;
    padding: 0 4px 0 2px;
    background: #fff;
    color: #8a8a8a;
}

.app-icon {
    width: 16px;
    height: 16px;
}

.titlebar h1 {
    font: 11px "Open Sans", sans-serif;
    flex: 1;
}

.window-buttons {
    display: flex;
}

.window-buttons button {
    width: 45px;
    height: 22px;
    display: grid;
    place-items: center;
}

.window-buttons svg {
    width: 12px;
    height: 12px;
    fill: none;
    stroke: #888;
}

.menubar {
    height: 22px;
    flex: none;
    display: flex;
    align-items: center;
    gap: 11px;
    padding: 0 6px;
    background: #e9e9e9;
    font: 11px Roboto, sans-serif;
}

.menubar a {
    color: #000;
    text-decoration: none;
}

.desk {
    flex: 1;
    min-height: 0;
    display: flex;
}

/* left side */
.side {
    width: 300px;
    flex: none;
    display: flex;
    flex-direction: column;
    background: #333;
    color: #ddd;
}

.snaps, .grid-row {
    display: flex;
    align-items: center;
    gap: 3px;
    padding: 0 2px;
    height: 29px;
    background: #2c2c2c;
}

.grid-row {
    gap: 2px;
    height: 33px;
    background: #666;
}

.snap {
    width: 23px;
    height: 23px;
    flex: none;
    background: #555;
    border: 1px solid #888;
    border-right-color: #aaa;
    border-bottom-color: #aaa;
}

.snap svg {
    width: 21px;
    height: 21px;
    fill: none;
    stroke: #c4c4c4;
}

.snap.on {
    background: #6f97f0;
    border-color: #b9cdf8;
}

.deg {
    font-size: 10px;
    fill: #111;
    stroke: none;
}

.snap-all {
    width: 50px;
    height: 22px;
    margin-left: 9px;
    display: grid;
    place-items: center;
    background: #6f97f0;
    border: 1px solid #a9c2f8;
}

.snap-all span {
    width: 15px;
    height: 15px;
    border: 1px solid #28479c;
    background: linear-gradient(#0b1a44, #0b1a44) center / 2px 9px no-repeat;
}

.steps {
    display: flex;
    flex: 1;
    margin-left: 4px;
}

.steps button {
    flex: 1;
    height: 15px;
    border: 1px solid #333;
    border-bottom-color: #999;
    background: #5c5c5c;
    color: #aaa;
    line-height: 13px;
}

.steps .on {
    background: #4a6db8;
    color: #b4cdf8;
}

.strip {
    height: 14px;
    display: flex;
    align-items: center;
    justify-content: space-between;
    padding: 0 2px 0 4px;
    background: linear-gradient(#d0cdc6, #a5a299);
    color: #000;
}

.strip h2, .panel-head h2 {
    font-size: 12px;
    line-height: 14px;
}

.close {
    width: 12px;
    height: 12px;
    background: #bdb7ae;
    border: 1px solid #7c766e;
}

.close svg {
    width: 10px;
    height: 10px;
}

.tools {
    height: 60px;
    display: flex;
    justify-content: space-between;
    padding: 1px 1px 1px 2px;
    background: #303030;
}

.tool-set {
    display: grid;
    grid-template-columns: repeat(7, 25px);
    grid-auto-rows: 29px;
    align-items: center;
}

.tool-set.right {
    grid-template-columns: repeat(4, 26px);
    padding-left: 3px;
    background: linear-gradient(#666 29px, transparent 29px);
}

.tool-set button {
    width: 24px;
    height: 24px;
    padding: 1px;
}

.tool-set .framed {
    padding: 0;
    border: 1px solid #aaa;
    background: #4c4c4c;
}

.tool-set .lit {
    background: #8fa9d8;
}

.tool-set svg {
    width: 22px;
    height: 22px;
}

/* layers */
.layers {
    padding: 5px 2px 2px;
}

.layer-top {
    display: flex;
    justify-content: space-between;
    height: 19px;
}

.layer-grid {
    display: grid;
    grid-template-columns: 142px 142px;
    column-gap: 9px;
    row-gap: 5px;
}

.layer-group {
    display: flex;
    gap: 2px;
}

.layer-rows {
    width: 134px;
}

.layer-group::after {
    content: "";
    width: 6px;
    background: #6f97f0;
    border-left: 2px solid #a9c2f8;
}

.layer {
    height: 16px;
    display: flex;
    align-items: flex-start;
    gap: 1px;
}

.layer label {
    width: 51px;
    height: 14px;
    padding-left: 2px;
    line-height: 13px;
    white-space: nowrap;
    border-bottom: 1px solid #111;
}

.layer.current label {
    background: #6f97f0;
    color: #dce8ff;
    border-bottom: 0;
}

.layer button, .layer input {
    height: 15px;
    width: 16px;
    flex: none;
    background: #5a5a5a;
    border: 1px solid #999;
    border-left-color: #444;
}

.layer .swatch {
    width: 22px;
}

.layer button svg {
    width: 12px;
    height: 12px;
}

.layer input {
    appearance: none;
    width: 26px;
    display: grid;
    place-items: center;
}

.layer input::before {
    content: "";
    width: 7px;
    height: 7px;
    border: 1px solid #6f86b0;
    border-radius: 4px;
}

.layer input:checked {
    background: #6f97f0;
    border-color: #b9cdf8;
}

.layer input:checked::before {
    width: 2px;
    border: 0;
    border-radius: 0;
    background: #0b1a44;
}

.hide-show {
    display: flex;
    gap: 8px;
    padding: 1px 13px 0 0;
}

.hide-show button {
    height: 14px;
    display: flex;
    align-items: center;
    gap: 4px;
    padding: 0 2px;
    border: 1px solid #888;
    font-size: 10px;
}

.hide-show svg {
    width: 20px;
    height: 12px;
}

.fold {
    height: 17px;
    display: grid;
    place-items: center;
    margin: 0 37px;
    background: linear-gradient(#888, #888) center / 100% 1px no-repeat;
}

.side > .fold {
    margin-bottom: 1px;
}

.fold svg {
    width: 12px;
    height: 12px;
}

.panel-head {
    height: 26px;
    flex: none;
    display: flex;
    align-items: center;
    padding-right: 4px;
    background: linear-gradient(#a5a299, #c8c5be);
    border-bottom: 1px solid #8a877f;
    color: #000;
}

.panel-icon {
    width: 25px;
    height: 25px;
    flex: none;
}

.panel-head h2 {
    width: 122px;
    height: 22px;
    padding-left: 5px;
    border-right: 1px solid #777;
}

.panel-head .close {
    width: 14px;
    height: 14px;
    margin-left: auto;
}

.panel-head .close svg {
    width: 12px;
    height: 12px;
}

/* metal weights */
.metals {
    height: 352px;
    display: flex;
    flex-direction: column;
    padding: 8px 6px 0;
}

.library {
    display: flex;
    gap: 3px;
    padding: 0 3px 0 6px;
    margin-bottom: 6px;
    color: #aaa;
    font-size: 11px;
    line-height: 16px;
}

.library span {
    flex: 1;
}

.switch {
    height: 17px;
    display: flex;
    align-items: center;
    justify-content: space-between;
    gap: 5px;
    padding: 0 1px 0 2px;
    border: 1px solid #999;
    background: #2a2a28;
    color: #999;
    font: 10px "DejaVu Sans", sans-serif;
}

.switch i {
    width: 13px;
    height: 13px;
    background: linear-gradient(#0c2424, #0c2424) center / 2px 8px no-repeat #5aa6a4;
}

.metal-list {
    display: flex;
    align-items: flex-start;
    height: 217px;
    overflow: hidden;
    flex: none;
}

.metal-list table {
    flex: 1;
    table-layout: fixed;
    border-collapse: separate;
    border-spacing: 0;
    background: #22211f;
    color: #eee;
}

.metal-list th {
    width: 50px;
    height: 24px;
    padding: 0 6px;
    background: #fff;
    color: #222;
    font-weight: normal;
    text-align: left;
    border-right: 1px solid #ddd;
}

.metal-list th:first-child {
    width: 151px;
}

.metal-list th:nth-child(3) {
    width: 60px;
}

.metal-list th:nth-child(4) {
    width: auto;
    padding: 0;
    border: 0;
}

.metal-list td {
    height: 17px;
    padding: 0 6px;
    line-height: 16px;
    white-space: nowrap;
    border-bottom: 1px solid #fff;
    border-right: 1px solid #fff;
}

.metal-list td:last-child {
    padding: 0;
    border-right: 0;
}

.scroll {
    width: 16px;
    align-self: stretch;
    display: flex;
    flex-direction: column;
    justify-content: space-between;
    background: #f0f0f0;
}

.scroll svg {
    width: 16px;
    height: 16px;
    fill: none;
    stroke: #555;
    stroke-width: 2;
}

.thumb {
    height: 30px;
    margin-bottom: auto;
    background: #cdcdcd;
}

.materials {
    width: 130px;
    margin: 6px 10px 0 auto;
    white-space: nowrap;
    font-size: 9px;
    padding-right: 0;
}

.materials i {
    border: 1px solid #555;
    background: radial-gradient(circle, #555 2px, #888 3px, #888 4px, #555 4px);
}

.hint {
    margin-top: 13px;
    color: #f0d83c;
    font: bold 12px/13px "Liberation Sans", Arial, sans-serif;
    text-align: center;
    white-space: nowrap;
}

.calc {
    width: 100px;
    margin: 14px auto 0;
}

.go {
    width: 15px;
    height: 15px;
    flex: none;
    background: #3c9420;
    border: 1px solid #68b848;
}

.switch .go {
    width: 14px;
    height: 13px;
}

/* gem reporter */
.gems {
    flex: 1;
    display: flex;
    flex-direction: column;
    padding: 4px 5px 0 2px;
}

.totals {
    display: flex;
    height: 17px;
    padding-left: 2px;
}

.totals label {
    flex: 1 1 auto;
    line-height: 15px;
    white-space: nowrap;
    border: 1px solid #555;
    padding-left: 3px;
}

.totals input {
    width: 35px;
    background: #000;
    color: #5ccfd8;
    text-align: center;
    border: 1px solid #555;
    margin-right: 4px;
    font: 11px "Liberation Sans", Arial, sans-serif;
}

.totals input:last-child {
    margin-right: 0;
}

.gems .fold {
    margin: 0 32px 0 35px;
}

.actions {
    display: flex;
    gap: 23px;
    height: 20px;
    padding: 2px 0 0 40px;
}

.actions button {
    height: 16px;
    display: flex;
    gap: 3px;
}

.actions span {
    width: 50px;
    height: 15px;
    line-height: 13px;
    text-align: left;
    padding-left: 2px;
    border: 1px solid #181818;
    border-top-color: #555;
}

.actions .save span {
    width: 105px;
}

.report {
    flex: 1;
    display: flex;
    align-items: flex-start;
    margin-right: 2px;
    padding: 7px 7px 0;
    background: #555;
    border: 1px solid #666;
}

.gem-thumb {
    width: 35px;
    height: 33px;
    flex: none;
    background: #4a4a4a;
    border: 1px solid #ddd;
}

.report table {
    width: 221px;
    border-collapse: collapse;
    background: #333;
}

.report th, .report td {
    height: 16px;
    padding: 0;
    border: 1px solid #888;
    font-weight: normal;
    text-align: center;
    line-height: 15px;
}

.report td:nth-child(2) {
    width: 36px;
}

.report td:nth-child(3) {
    width: 48px;
}

.report td:nth-child(4) {
    width: 17px;
}

.report td button {
    display: block;
}

/* work area */
.work {
    flex: 1;
    min-width: 0;
    display: flex;
    flex-direction: column;
    padding: 5px 8px 8px 6px;
    background: #afb3b4;
    border-top: 1px solid #fff;
    border-left: 2px solid #eee;
}

.command {
    padding: 3px 0 0 2px;
    background: #a9dcec;
    border-left: 4px double #4a7c8c;
    color: #10304a;
    font: 13px "Liberation Sans", Arial, sans-serif;
}

.history {
    display: flex;
    height: 42px;
    background: #3bb7e2;
    border-bottom: 1px solid #10506c;
}

.log {
    flex: 1;
    line-height: 16px;
    padding: 1px;
}

.prompt {
    height: 19px;
    display: flex;
    align-items: center;
    background: #3bb7e2;
}

.prompt label {
    font-weight: bold;
    padding: 0 5px 0 1px;
}

.prompt input {
    flex: 1;
    height: 16px;
    border-left: 1px solid #50798c;
    outline: 0;
}

.spin {
    width: 16px;
    height: 19px;
    background: #eee;
}

.spin button {
    width: 14px;
    height: 9px;
    display: grid;
    place-items: center;
    border: 1px solid #999;
    margin: 0 1px;
}

.spin svg {
    width: 7px;
    height: 5px;
}

.tabs {
    height: 29px;
    display: flex;
    align-items: flex-end;
    padding-bottom: 1px;
    background: #add6e3;
    border-bottom: 1px solid #123;
    font: 12px "Open Sans", sans-serif;
    color: #163848;
}

.tab {
    position: relative;
    width: 46px;
    height: 20px;
    padding: 0 0 2px 6px;
    z-index: 1;
}

.tab svg {
    position: absolute;
    inset: 0;
    width: 100%;
    height: 100%;
    z-index: -1;
    fill: #d4e7ee;
    stroke: #2c4c58;
}

.tab.first {
    width: 78px;
    padding-left: 2px;
}

.tab.active {
    margin-left: -9px;
    padding-left: 10px;
    z-index: 2;
}

.tab.active svg {
    fill: #3bb0da;
}

.tab.plus {
    width: 31px;
}

.tab.plus svg {
    fill: #b8dce8;
}

.viewport {
    flex: 1;
    min-height: 0;
    position: relative;
    background: #000;
}

.scene {
    width: 100%;
    height: 100%;
}

.view-name {
    position: absolute;
    top: 0;
    left: 0;
    display: flex;
    align-items: center;
    gap: 8px;
    height: 18px;
    padding: 0 1px 0 8px;
    border-radius: 0 0 4px 0;
    background: #3bb0da;
    color: #0d3a50;
    font: 12px "Open Sans", sans-serif;
}

.view-name svg {
    width: 10px;
    height: 18px;
}

.dim {
    font: 105px "Liberation Sans", Arial, sans-serif;
    fill: #f40a08;
    stroke: #f40a08;
    stroke-width: 1;
}

.axis {
    font: 12px "DejaVu Sans Mono", monospace;
}

/* taskbar */
.taskbar {
    height: 40px;
    flex: none;
    display: flex;
    justify-content: space-between;
    background: #1f1f22;
    color: #eee;
    font: 11px "Open Sans", "Noto Sans", sans-serif;
}

.apps {
    display: flex;
}

.apps button {
    width: 49px;
    display: grid;
    place-items: center;
    border-bottom: 2px solid transparent;
}

.apps .open {
    width: 40px;
    margin-left: 5px;
    border-color: #8cd8ec;
}

.apps svg {
    width: 24px;
    height: 24px;
}

.tray {
    display: flex;
    align-items: center;
    gap: 8px;
    padding-right: 17px;
}

.tray svg {
    fill: none;
    stroke: #eee;
}

.more {
    align-self: flex-start;
    font-size: 15px;
}

.people {
    width: 16px;
    height: 18px;
    margin: 0 52px 0 14px;
}

.weather {
    display: flex;
    align-items: center;
    gap: 9px;
    margin-right: 8px;
    font-size: 13px;
}

.weather svg {
    width: 24px;
    height: 18px;
}

.i16 {
    width: 16px;
    height: 16px;
}

.pen {
    margin: 0 4px;
}

.keys {
    width: 24px;
    height: 16px;
}

.clock {
    width: 60px;
    line-height: 18px;
    text-align: center;
}

.notes {
    position: relative;
    margin-left: 6px;
}

.notes svg {
    width: 24px;
    height: 24px;
}

.notes b {
    position: absolute;
    right: -1px;
    bottom: -5px;
    width: 16px;
    height: 16px;
    border: 1px solid #999;
    border-radius: 8px;
    background: #333;
    line-height: 14px;
}
```

FILE: script.js
```js
// name, colour, visible, locked
const groups = [
    [['Metal 01', '#08804c', 1], ['Metal 02', '#3cb864', 0], ['Metal 03', '#80f870', 1], ['Metal 04', '#c0ffb8', 1]],
    [['User 01', '#f80000', 1, 1], ['User 02', '#00f800', 0], ['User 03', '#0000f0', 1], ['User 04', '#888888', 1]],
    [['Gem 01', '#0438a0', 1], ['Gem 02', '#3c74d8', 1], ['Gem 03', '#78b0ff', 1], ['Gem 04', '#a8ccff', 1]],
    [['Heads', '#7c18a4', 1], ['Finger', '#a83c3c', 1], ['Cutting', '#fc7c10', 0], ['Creation', '#fcb828', 1]]
];

function layerRow([name, color, visible, locked], current) {
    const id = 'layer-' + name.toLowerCase().replace(' ', '-') + '-on';
    return `<div class="layer${current ? ' current' : ''}">
        <label for="${id}">${name}</label>
        <button aria-label="${name} menu"><svg viewBox="0 0 12 12"><path d="M4 2v8l5-4z" fill="#fff"/></svg></button>
        <button class="swatch" aria-label="${name} color" style="background:${color}"></button>
        <button aria-label="${name} lock"><svg><use href="#lock-${locked ? 'shut' : 'open'}"/></svg></button>
        <input type="checkbox" id="${id}" ${visible ? 'checked' : ''}>
    </div>`;
}

document.getElementById('layer-lights').innerHTML = layerRow(['Lights', '#ffffff', 1], true);
document.getElementById('layer-grid').innerHTML = groups.map(rows =>
    `<div class="layer-group"><div class="layer-rows">${rows.map(r => layerRow(r)).join('')}</div></div>`
).join('');

// channel stones: x of the table and its colour, seen flatter towards the ends
const stones = [
    [557, '#38567e'], [572, '#40608e'], [589, '#456898'], [609, '#4a6ea4'], [631, '#4e76b0'], [654, '#5480bc'],
    [680, '#5a88c8'], [708, '#6090d4'], [737, '#6696dc'], [769, '#6a9ae2'], [802, '#6e9fe8'], [837, '#74a6f0'],
    [870, '#84b6fa'], [905, '#a4e0ff'], [944, '#d8ffff'], [983, '#f4ffff'], [1024, '#c4f8ff'], [1068, '#98d0ff'],
    [1109, '#78a8f4'], [1150, '#6c9ae0'], [1190, '#628ccc'], [1229, '#5a80bc'], [1266, '#5478b0'], [1301, '#4c6ea0'],
    [1334, '#446494'], [1366, '#3c5a88'], [1398, '#34507c'], [1426, '#2c4670'], [1454, '#243c64'], [1479, '#1c3054'],
    [1503, '#142444'], [1525, '#0c1a34'], [1545, '#081428'], [1561, '#040c1c'], [1576, '#040810']
];

document.getElementById('small-stones').innerHTML = stones.map(([x, color], i) => {
    const before = i ? x - stones[i - 1][0] : 15;
    const after = i < stones.length - 1 ? stones[i + 1][0] - x : 15;
    const scale = (before + after) / 80;
    const side = x < 850 ? 8 : -8;
    const glint = (x > 590 && x < 830) || (x > 1160 && x < 1400);
    return `<use href="#stone" transform="translate(${x} 608) scale(${scale.toFixed(2)} 1)" color="${color}"/>` +
        (glint ? `<path d="M${x + side} 600l5 2-1 5-6-2z" fill="#e8ffff"/>` : '');
}).join('');

// prongs: ball x, ball y, far end of the shaft
const back = [
    [721, 495, 770], [774, 496, 812], [815, 496, 855], [880, 488, 912], [722, 576, 748], [775, 575, 800],
    [815, 575, 841], [694, 515, 712], [694, 556, 712], [1243, 496, 1213], [1305, 498, 1265],
    [1345, 498, 1305], [1304, 577, 1279], [1346, 577, 1320], [1241, 579, 1222], [1364, 537, 1350]
];
const front = [
    [750, 515, 774], [841, 512, 858], [919, 512, 949], [755, 535, 768], [836, 536, 846], [750, 556, 770],
    [842, 558, 856], [919, 559, 948], [880, 583, 903], [1209, 517, 1181], [1209, 558, 1189],
    [1276, 517, 1264], [1282, 537, 1272], [1276, 558, 1264]
];

function prong([x, y, end]) {
    const left = Math.min(x, end);
    const fill = end > x ? 'shaft' : 'shaft-lit';
    return `<rect x="${left}" y="${y - 6}" width="${Math.abs(end - x)}" height="14" rx="4" fill="url(#${fill})"/>
        <circle cx="${x}" cy="${y}" r="7" fill="url(#ball)"/>`;
}

document.getElementById('prongs-back').innerHTML = back.map(prong).join('');
document.getElementById('prongs-front').innerHTML = front.map(prong).join('');
```
